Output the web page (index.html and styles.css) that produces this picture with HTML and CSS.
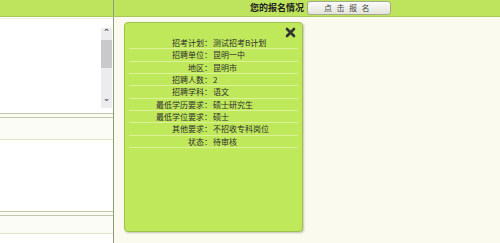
FILE: index.html
```html
<!DOCTYPE html>
<html lang="zh">
<head>
  <meta charset="UTF-8">
  <title>报名情况</title>
  <link rel="stylesheet" href="styles.css">
</head>
<body>
  <!-- barra superior -->
  <div class="barra">
    <div class="barra-izq"></div>
    <div class="barra-der">
      <span class="titulo">您的报名情况</span>
      <button class="btn-reg">点击报名</button>
    </div>
  </div>

  <div class="cuerpo">
    <!-- columna izquierda -->
    <div class="lateral">
      <div class="panel-lista">
        <div class="lista">
          <div class="scroll">
            <span class="flecha">&#8963;</span>
            <span class="pulgar"></span>
            <span class="flecha abajo">&#8964;</span>
          </div>
        </div>
      </div>
      <div class="divisor"></div>
      <div class="franja"></div>
      <div class="bloque"></div>
      <div class="divisor"></div>
      <div class="franja corta"></div>
      <div class="bloque"></div>
    </div>
    <div class="principal"></div>
  </div>

  <!-- ventana emergente con el detalle -->
  <div class="popup">
    <svg class="cerrar" width="11" height="11" viewBox="0 0 11 11">
      <path d="M2 2 L9 9 M9 2 L2 9" stroke="#333" stroke-width="2.6" stroke-linecap="round"/>
    </svg>
    <div class="filas">
      <div class="fila"><span class="etq">招考计划：</span><span class="val">测试招考B计划</span></div>
      <div class="fila"><span class="etq">招聘单位：</span><span class="val">昆明一中</span></div>
      <div class="fila"><span class="etq">地区：</span><span class="val">昆明市</span></div>
      <div class="fila"><span class="etq">招聘人数：</span><span class="val">2</span></div>
      <div class="fila"><span class="etq">招聘学科：</span><span class="val">语文</span></div>
      <div class="fila"><span class="etq">最低学历要求：</span><span class="val">硕士研究生</span></div>
      <div class="fila"><span class="etq">最低学位要求：</span><span class="val">硕士</span></div>
      <div class="fila"><span class="etq">其他要求：</span><span class="val">不招收专科岗位</span></div>
      <div class="fila"><span class="etq">状态：</span><span class="val">待审核</span></div>
    </div>
  </div>
</body>
</html>
```

FILE: styles.css
```css
/* Reset básico */
* {
  margin: 0;
  padding: 0;
  box-sizing: border-box;
}
body {
  width: 500px;
  height: 243px;
  overflow: hidden;
  position: relative;
  font-family: "Noto Sans CJK SC", "Noto Sans", sans-serif;
  color: #333;
  background: #fafaee;
}
/* barra superior verde */
.barra {
  display: flex;
  height: 17px;
  background: #bde45c;
  border-bottom: 1px solid #a9c858;
}
.barra-izq {
  width: 114px;
  border-right: 1px solid #8d9a7e;
}
.barra-der {
  flex: 1;
  display: flex;
  align-items: center;
  padding-left: 136px;
}
.titulo {
  font-size: 9px;
  font-weight: bold;
  color: #222;
  line-height: 14px;
}
.btn-reg {
  margin-left: 3px;
  width: 84px;
  height: 14px;
  margin-top: -1px;
  border: 1px solid #a6a894;
  border-radius: 3px;
  background: linear-gradient(#fbfbf8, #e4e4dc);
  font-family: inherit;
  font-size: 8px;
  letter-spacing: 4.5px;
  color: #444;
  line-height: 12px;
}
/* cuerpo */
.cuerpo {
  display: flex;
  height: 226px;
}
.lateral {
  width: 114px;
  border-right: 1px solid #8d9a7e;
  background: #fff;
  display: flex;
  flex-direction: column;
  overflow: hidden;
}
.lateral > div {
  flex-shrink: 0;
}
.panel-lista {
  height: 95px;
  padding-top: 9px;
  border-top: 1px solid #eef0e6;
  margin-top: 1px;
}
.lista {
  height: 80px;
  display: flex;
  justify-content: flex-end;
}
.scroll {
  width: 11px;
  margin-right: 1px;
  background: #ececef;
  display: flex;
  flex-direction: column;
  align-items: center;
}
.flecha {
  font-size: 9px;
  line-height: 9px;
  height: 9px;
  color: #555;
  font-family: "DejaVu Sans", sans-serif;
  font-weight: bold;
}
.pulgar {
  width: 100%;
  height: 28px;
  background: #c9c9cc;
  margin-top: 3px;
}
.abajo {
  margin-top: auto;
  margin-bottom: 5px;
}
.divisor {
  height: 5px;
  border-top: 1px solid #c2c8ab;
  border-bottom: 1px solid #c2c8ab;
  background: #fbfbf2;
}
.franja {
  height: 22px;
  background: #fcfcf6;
  border-bottom: 1px solid #dfe5c8;
}
.franja.corta {
  height: 18px;
}
.bloque {
  height: 71px;
  background: #fff;
}
.principal {
  flex: 1;
}
/* ventana emergente */
.popup {
  position: absolute;
  left: 124px;
  top: 22px;
  width: 179px;
  height: 210px;
  background: #c0e85b;
  border: 1px solid #9fc24f;
  border-radius: 4px;
  box-shadow: 1px 1px 2px rgba(90, 100, 60, 0.35);
  padding: 14px 4px 0;
}
.cerrar {
  position: absolute;
  right: 6px;
  top: 4px;
}
.fila {
  display: flex;
  height: 12.34px;
  border-bottom: 1px solid #dcf199;
  font-size: 8px;
  line-height: 11px;
  color: #2e2e2e;
}
.etq {
  width: 83px;
  text-align: right;
}
.val {
  padding-left: 1px;
}
```
